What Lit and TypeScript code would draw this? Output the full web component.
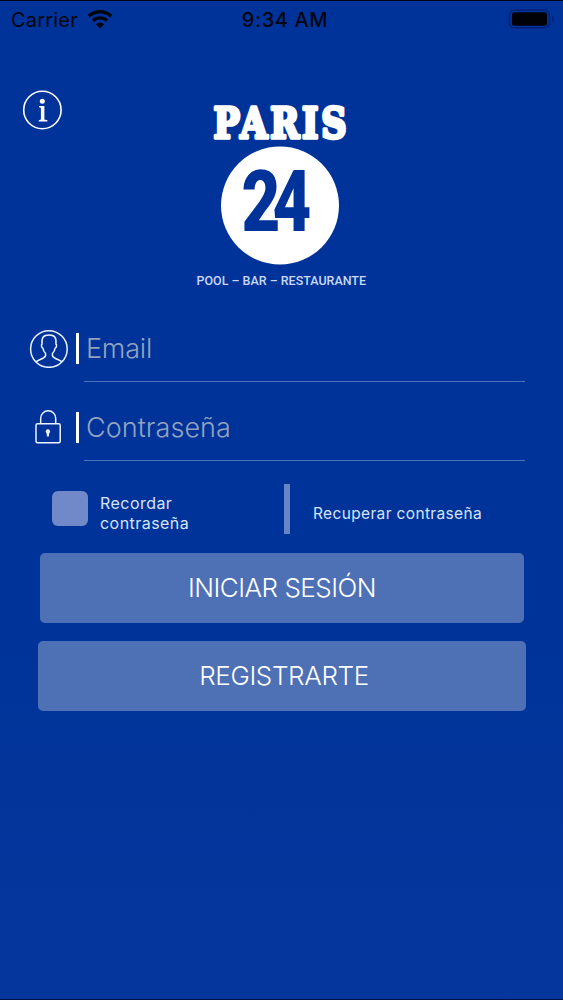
import { LitElement, html, css } from "lit";
import { customElement } from "lit/decorators.js";

@customElement("app-root")
export class AppRoot extends LitElement {
  static styles = css`
    :host {
      display: flex;
      flex-direction: column;
      box-sizing: border-box;
      width: 563px;
      height: 1000px;
      overflow: hidden;
      background: linear-gradient(#003399 0%, #003399 60%, #05369d 100%);
      border-top: 1px solid #000018;
      border-bottom: 1px solid #001148;
      font-family: Inter, "Liberation Sans", sans-serif;
      color: #fff;
    }
    * { box-sizing: border-box; }
    svg { display: block; flex: none; }
    .status {
      display: grid;
      grid-template-columns: 1fr auto 1fr;
      align-items: center;
      height: 37px;
      padding: 0 8px 0 11px;
      color: #000510;
      font-size: 20px;
      line-height: 24px;
    }
    .carrier { display: flex; align-items: center; gap: 9px; letter-spacing: 0.2px; }
    .time { font-weight: 550; letter-spacing: 0.6px; padding-left: 4px; }
    .battery { justify-self: end; }
    .hero {
      display: grid;
      grid-template-columns: 172px 1fr;
      height: 262px;
    }
    .info { margin: 52px 0 0 22px; }
    .logo { margin: 42px 0 0 18px; overflow: visible; }
    .field {
      display: flex;
      height: 79px;
      padding-left: 28px;
    }
    .field svg { margin-top: 28px; }
    .bar { width: 3px; height: 31px; margin: 33px 0 0 8px; background: #fff; flex: none; }
    .input {
      width: 441px;
      height: 52px;
      margin: 30px 0 0 5px;
      padding: 2px 0 0 2px;
      border-bottom: 1px solid #4b74bd;
      font-size: 27px;
      font-weight: 300;
      line-height: 33px;
      color: #94a2bd;
      white-space: nowrap;
    }
    .email { letter-spacing: -0.2px; }
    .pass { letter-spacing: 0.05px; }
    .options {
      display: flex;
      height: 95px;
      padding-left: 52px;
      font-size: 16px;
      font-weight: 400;
      line-height: 20px;
      color: #d5e4fb;
      letter-spacing: 0.45px;
    }
    .check { width: 36px; height: 35px; margin-top: 33px; border-radius: 6px; background: #7189c8; }
    .remember { width: 184px; padding: 35px 0 0 12px; }
    .divider { width: 6px; height: 50px; margin: 26px 0 0 12px; background: #6684c6; }
    .recover { padding: 46px 0 0 23px; font-size: 15.5px; letter-spacing: 0.35px; }
    .actions { display: flex; flex-direction: column; gap: 18px; align-items: center; padding-left: 1px; }
    .btn {
      width: 484px;
      height: 70px;
      padding: 0;
      border: 0;
      border-radius: 5px;
      background: #4e70b4;
      color: #fff;
      font-family: inherit;
      font-size: 26px;
      font-weight: 300;
      letter-spacing: -0.5px;
      line-height: 70px;
      text-align: center;
    }
    .wide { width: 488px; padding-left: 4px; letter-spacing: -0.35px; }
    .paris { font-family: "DejaVu Serif", serif; font-weight: 700; font-size: 42.5px; letter-spacing: 3.5px; stroke-width: 3.6px; stroke: #fff; stroke-linejoin: round; }
    .num { font-family: Roboto, sans-serif; font-weight: 900; font-size: 85px; fill: #003399; letter-spacing: -10px; stroke: #fff; stroke-width: 1.4px; paint-order: stroke; }
    .tag { font-family: Roboto, sans-serif; font-weight: 500; font-size: 12px; fill: #c9d8f6; }
  `;

  private field(icon: unknown, label: string, cls: string) {
    return html`<div class="field">
      ${icon}
      <div class="bar"></div>
      <div class="input ${cls}">${label}</div>
    </div>`;
  }

  render() {
    const user = html`<svg width="40" height="40" viewBox="0 0 40 40" fill="none" stroke="#eaf3ff" stroke-width="1.5" stroke-linejoin="round">
      <circle cx="20.9" cy="21" r="18.3" />
      <path d="M8 34 C9.5 31.5 17 31 17.6 27.5 V25.5 C16 24 15.1 22 14.9 20.2 C13.3 19.8 13.1 16.5 14.1 16 C13.4 9.5 15.5 7 21 7 C26.5 7 28.6 9.5 27.9 16 C28.9 16.5 28.7 19.8 27.1 20.2 C26.9 22 26 24 24.4 25.5 V27.5 C25 31 32.5 31.5 34 34" />
    </svg>`;
    const lock = html`<svg width="40" height="40" viewBox="0 0 40 40" fill="none" stroke="#eaf3ff" stroke-width="1.5">
      <rect x="8" y="16.8" width="24.2" height="19" rx="1.5" />
      <path d="M12.7 16.5 V11.3 A7.5 7.5 0 0 1 27.7 11.3 V16.5" />
      <circle cx="19.9" cy="24.5" r="2.2" fill="#eaf3ff" stroke="none" />
      <path d="M19.9 24.5 V29.4" stroke-width="2.2" />
    </svg>`;
    return html`
      <div class="status">
        <div class="carrier">
          <span>Carrier</span>
          <svg width="26" height="19" viewBox="0 0 26 19" fill="none" stroke="#000510" stroke-width="3.3">
            <path d="M1.8 6.3 A16 16 0 0 1 24.2 6.3" />
            <path d="M6 10.8 A10 10 0 0 1 20 10.8" />
            <path d="M8.9 14.2 Q13 10.9 17.1 14.2 L13 18.4 Z" fill="#000510" stroke="none" />
          </svg>
        </div>
        <div class="time">9:34 AM</div>
        <svg class="battery" width="48" height="22" viewBox="0 0 48 22">
          <rect x="2.5" y="1" width="40" height="18" rx="5" fill="none" stroke="#00237a" stroke-width="1.5" />
          <rect x="5" y="3.3" width="35" height="13.4" rx="2.5" fill="#000208" />
          <path d="M45 7 Q47 8 47 10 Q47 12.2 45 13.2 Z" fill="#00237a" />
        </svg>
      </div>
      <div class="hero">
        <svg class="info" width="40" height="40" viewBox="0 0 40 40" fill="#fff">
          <circle cx="20.4" cy="20" r="18.7" fill="none" stroke="#fff" stroke-width="1.6" />
          <circle cx="20.3" cy="11.2" r="2.5" />
          <path d="M17 16 H22.4 V29.4 L25.4 30.2 V31.4 H16.8 V30.2 L18.9 29.4 V17.8 L17 17.2 Z" />
        </svg>
        <svg class="logo" width="190" height="220" viewBox="190 80 190 220" fill="#fff">
          <circle cx="280" cy="205.5" r="59" />
          <text class="paris" x="213.5" y="138" textLength="136" lengthAdjust="spacingAndGlyphs">PARIS</text>
          <text class="num" x="241.5" y="231" textLength="62" lengthAdjust="spacingAndGlyphs">24</text>
          <text class="tag" x="196.5" y="284.5" textLength="169.5" lengthAdjust="spacingAndGlyphs">POOL – BAR – RESTAURANTE</text>
        </svg>
      </div>
      ${this.field(user, "Email", "email")}
      ${this.field(lock, "Contraseña", "pass")}
      <div class="options">
        <div class="check"></div>
        <div class="remember">Recordar<br />contraseña</div>
        <div class="divider"></div>
        <div class="recover">Recuperar contraseña</div>
      </div>
      <div class="actions">
        <button class="btn">INICIAR SESIÓN</button>
        <button class="btn wide">REGISTRARTE</button>
      </div>
    `;
  }
}
